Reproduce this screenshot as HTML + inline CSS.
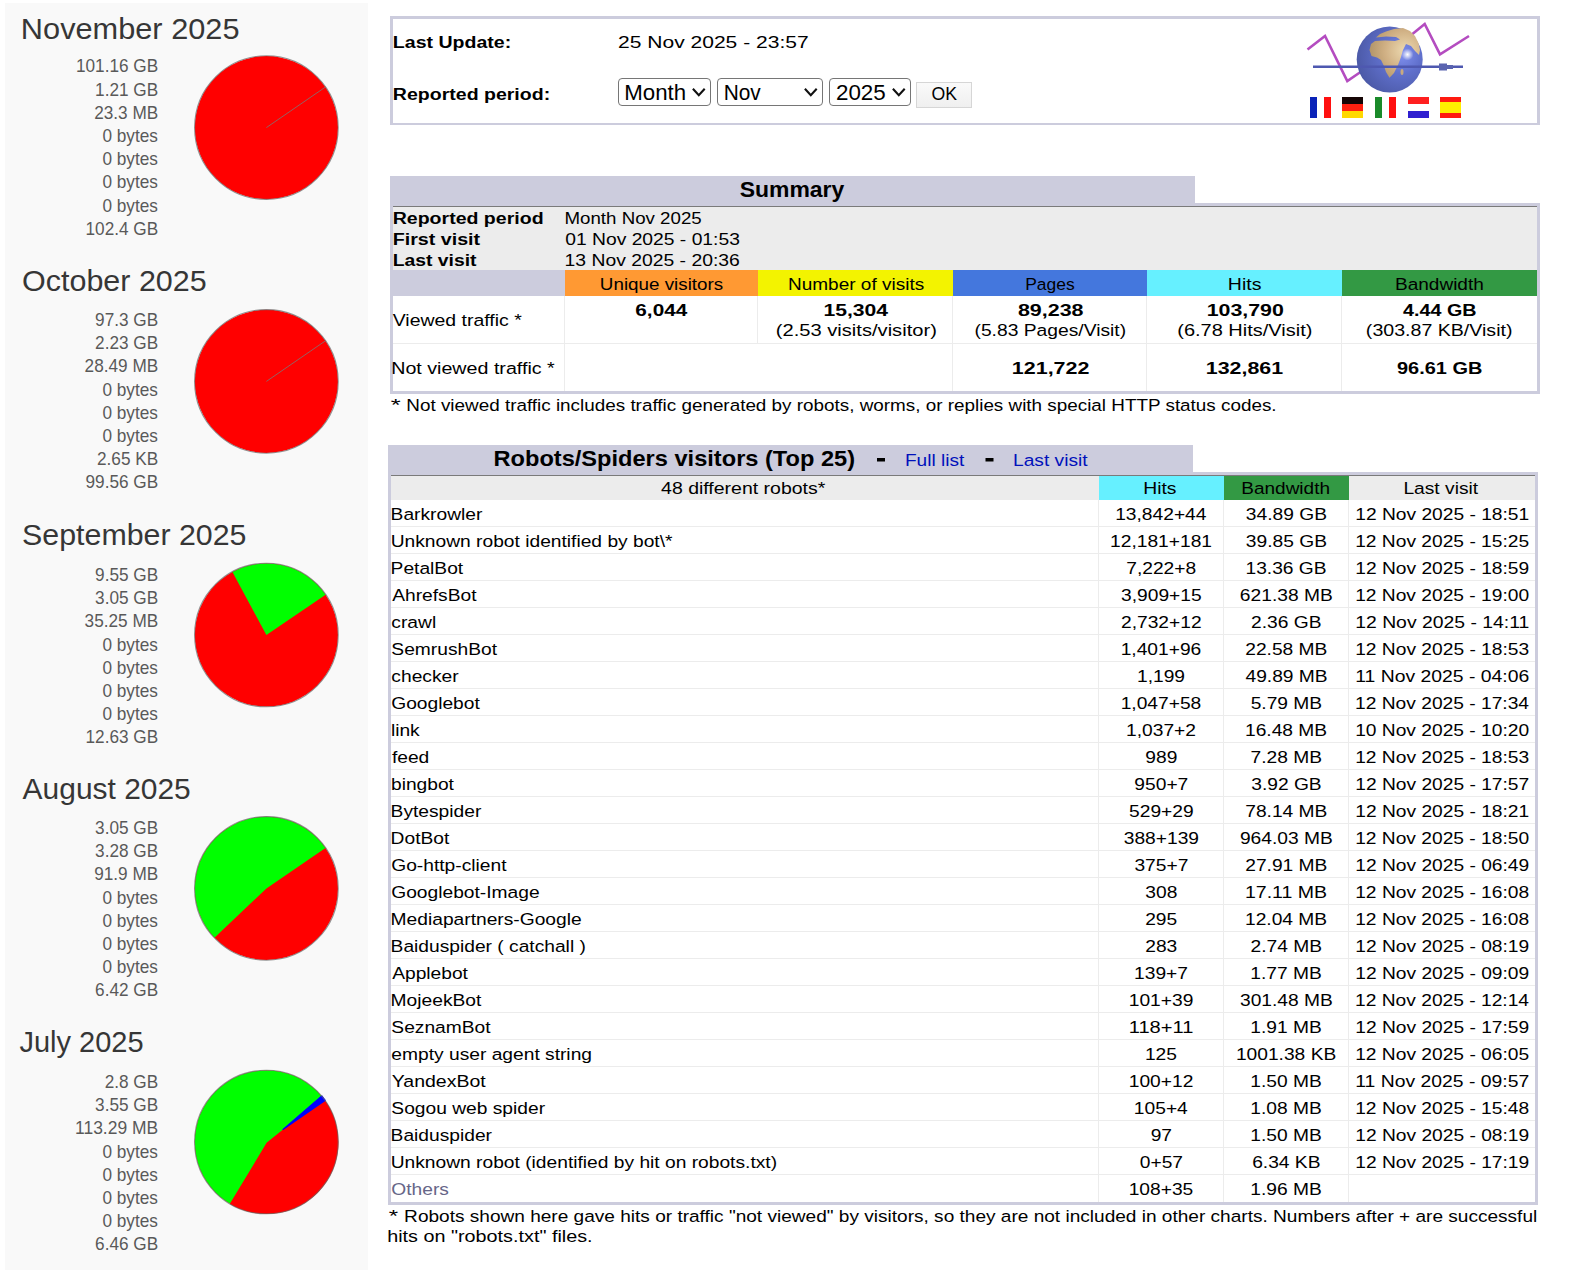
<!DOCTYPE html>
<html><head><meta charset="utf-8"><title>AWStats</title>
<style>html,body{margin:0;padding:0;background:#fff;width:1571px;height:1275px;overflow:hidden}svg{display:block}text{font-family:"Liberation Sans",sans-serif}</style>
</head><body>
<svg width="1571" height="1275" viewBox="0 0 1571 1275" font-family="Liberation Sans, sans-serif"><rect x="5" y="3" width="363" height="1267" fill="#f9f9f9" />
<text x="20.88" y="39.00" font-size="29.6" fill="#363636" textLength="218.61" lengthAdjust="spacingAndGlyphs" >November 2025</text>
<text x="75.97" y="72.30" font-size="18.5" fill="#595959" textLength="82.24" lengthAdjust="spacingAndGlyphs" >101.16 GB</text>
<text x="95.10" y="95.50" font-size="18.5" fill="#595959" textLength="63.11" lengthAdjust="spacingAndGlyphs" >1.21 GB</text>
<text x="94.15" y="118.70" font-size="18.5" fill="#595959" textLength="64.05" lengthAdjust="spacingAndGlyphs" >23.3 MB</text>
<text x="102.47" y="141.90" font-size="18.5" fill="#595959" textLength="55.45" lengthAdjust="spacingAndGlyphs" >0 bytes</text>
<text x="102.47" y="165.10" font-size="18.5" fill="#595959" textLength="55.45" lengthAdjust="spacingAndGlyphs" >0 bytes</text>
<text x="102.47" y="188.30" font-size="18.5" fill="#595959" textLength="55.45" lengthAdjust="spacingAndGlyphs" >0 bytes</text>
<text x="102.47" y="211.50" font-size="18.5" fill="#595959" textLength="55.45" lengthAdjust="spacingAndGlyphs" >0 bytes</text>
<text x="85.54" y="234.70" font-size="18.5" fill="#595959" textLength="72.67" lengthAdjust="spacingAndGlyphs" >102.4 GB</text>
<circle cx="266.4" cy="127.6" r="71.6" fill="#ff0000"/>
<line x1="266.4" y1="127.6" x2="325.41" y2="87.05" stroke="#7a7a7a" stroke-width="1" opacity="0.8"/>
<circle cx="266.4" cy="127.6" r="71.8" fill="none" stroke="#666" stroke-width="1.1" opacity="0.7"/>
<text x="22.06" y="291.00" font-size="29.6" fill="#363636" textLength="184.62" lengthAdjust="spacingAndGlyphs" >October 2025</text>
<text x="95.10" y="326.00" font-size="18.5" fill="#595959" textLength="63.11" lengthAdjust="spacingAndGlyphs" >97.3 GB</text>
<text x="95.10" y="349.20" font-size="18.5" fill="#595959" textLength="63.11" lengthAdjust="spacingAndGlyphs" >2.23 GB</text>
<text x="84.59" y="372.40" font-size="18.5" fill="#595959" textLength="73.62" lengthAdjust="spacingAndGlyphs" >28.49 MB</text>
<text x="102.47" y="395.60" font-size="18.5" fill="#595959" textLength="55.45" lengthAdjust="spacingAndGlyphs" >0 bytes</text>
<text x="102.47" y="418.80" font-size="18.5" fill="#595959" textLength="55.45" lengthAdjust="spacingAndGlyphs" >0 bytes</text>
<text x="102.47" y="442.00" font-size="18.5" fill="#595959" textLength="55.45" lengthAdjust="spacingAndGlyphs" >0 bytes</text>
<text x="97.01" y="465.20" font-size="18.5" fill="#595959" textLength="61.20" lengthAdjust="spacingAndGlyphs" >2.65 KB</text>
<text x="85.54" y="488.40" font-size="18.5" fill="#595959" textLength="72.67" lengthAdjust="spacingAndGlyphs" >99.56 GB</text>
<circle cx="266.4" cy="381.4" r="71.6" fill="#ff0000"/>
<line x1="266.4" y1="381.4" x2="325.41" y2="340.85" stroke="#7a7a7a" stroke-width="1" opacity="0.8"/>
<circle cx="266.4" cy="381.4" r="71.8" fill="none" stroke="#666" stroke-width="1.1" opacity="0.7"/>
<text x="22.12" y="545.20" font-size="29.6" fill="#363636" textLength="224.35" lengthAdjust="spacingAndGlyphs" >September 2025</text>
<text x="95.10" y="580.90" font-size="18.5" fill="#595959" textLength="63.11" lengthAdjust="spacingAndGlyphs" >9.55 GB</text>
<text x="95.10" y="604.10" font-size="18.5" fill="#595959" textLength="63.11" lengthAdjust="spacingAndGlyphs" >3.05 GB</text>
<text x="84.59" y="627.30" font-size="18.5" fill="#595959" textLength="73.62" lengthAdjust="spacingAndGlyphs" >35.25 MB</text>
<text x="102.47" y="650.50" font-size="18.5" fill="#595959" textLength="55.45" lengthAdjust="spacingAndGlyphs" >0 bytes</text>
<text x="102.47" y="673.70" font-size="18.5" fill="#595959" textLength="55.45" lengthAdjust="spacingAndGlyphs" >0 bytes</text>
<text x="102.47" y="696.90" font-size="18.5" fill="#595959" textLength="55.45" lengthAdjust="spacingAndGlyphs" >0 bytes</text>
<text x="102.47" y="720.10" font-size="18.5" fill="#595959" textLength="55.45" lengthAdjust="spacingAndGlyphs" >0 bytes</text>
<text x="85.54" y="743.30" font-size="18.5" fill="#595959" textLength="72.67" lengthAdjust="spacingAndGlyphs" >12.63 GB</text>
<circle cx="266.4" cy="635.0" r="71.6" fill="#ff0000"/>
<path d="M266.40,635.00 L325.62,594.75 A71.6,71.6 0 0 0 232.46,571.96 Z" fill="#00ff00"/>
<circle cx="266.4" cy="635.0" r="71.8" fill="none" stroke="#666" stroke-width="1.1" opacity="0.7"/>
<text x="22.64" y="799.00" font-size="29.6" fill="#363636" textLength="168.12" lengthAdjust="spacingAndGlyphs" >August 2025</text>
<text x="95.10" y="834.00" font-size="18.5" fill="#595959" textLength="63.11" lengthAdjust="spacingAndGlyphs" >3.05 GB</text>
<text x="95.10" y="857.20" font-size="18.5" fill="#595959" textLength="63.11" lengthAdjust="spacingAndGlyphs" >3.28 GB</text>
<text x="94.15" y="880.40" font-size="18.5" fill="#595959" textLength="64.05" lengthAdjust="spacingAndGlyphs" >91.9 MB</text>
<text x="102.47" y="903.60" font-size="18.5" fill="#595959" textLength="55.45" lengthAdjust="spacingAndGlyphs" >0 bytes</text>
<text x="102.47" y="926.80" font-size="18.5" fill="#595959" textLength="55.45" lengthAdjust="spacingAndGlyphs" >0 bytes</text>
<text x="102.47" y="950.00" font-size="18.5" fill="#595959" textLength="55.45" lengthAdjust="spacingAndGlyphs" >0 bytes</text>
<text x="102.47" y="973.20" font-size="18.5" fill="#595959" textLength="55.45" lengthAdjust="spacingAndGlyphs" >0 bytes</text>
<text x="95.10" y="996.40" font-size="18.5" fill="#595959" textLength="63.11" lengthAdjust="spacingAndGlyphs" >6.42 GB</text>
<circle cx="266.4" cy="888.4" r="71.6" fill="#ff0000"/>
<path d="M266.40,888.40 L325.48,847.95 A71.6,71.6 0 1 0 214.46,937.69 Z" fill="#00ff00"/>
<circle cx="266.4" cy="888.4" r="71.8" fill="none" stroke="#666" stroke-width="1.1" opacity="0.7"/>
<text x="19.45" y="1052.20" font-size="29.6" fill="#363636" textLength="124.17" lengthAdjust="spacingAndGlyphs" >July 2025</text>
<text x="104.67" y="1088.00" font-size="18.5" fill="#595959" textLength="53.54" lengthAdjust="spacingAndGlyphs" >2.8 GB</text>
<text x="95.10" y="1111.20" font-size="18.5" fill="#595959" textLength="63.11" lengthAdjust="spacingAndGlyphs" >3.55 GB</text>
<text x="75.02" y="1134.40" font-size="18.5" fill="#595959" textLength="83.19" lengthAdjust="spacingAndGlyphs" >113.29 MB</text>
<text x="102.47" y="1157.60" font-size="18.5" fill="#595959" textLength="55.45" lengthAdjust="spacingAndGlyphs" >0 bytes</text>
<text x="102.47" y="1180.80" font-size="18.5" fill="#595959" textLength="55.45" lengthAdjust="spacingAndGlyphs" >0 bytes</text>
<text x="102.47" y="1204.00" font-size="18.5" fill="#595959" textLength="55.45" lengthAdjust="spacingAndGlyphs" >0 bytes</text>
<text x="102.47" y="1227.20" font-size="18.5" fill="#595959" textLength="55.45" lengthAdjust="spacingAndGlyphs" >0 bytes</text>
<text x="95.10" y="1250.40" font-size="18.5" fill="#595959" textLength="63.11" lengthAdjust="spacingAndGlyphs" >6.46 GB</text>
<circle cx="266.4" cy="1142.0" r="71.6" fill="#ff0000"/>
<circle cx="266.4" cy="1142.0" r="71.6" fill="#00ff00"/>
<path d="M266.6,1142.8 L229.71,1204.07 A72.1,72.1 0 0 0 325.28,1100.38 L283,1129.4 Z" fill="#ff0000"/>
<path d="M283,1129.4 L321.81,1095.86 A72.1,72.1 0 0 0 325.28,1100.38 Z" fill="#0000ff" stroke="#0000ff" stroke-width="1.2" stroke-linejoin="round"/>
<circle cx="266.4" cy="1142.0" r="71.8" fill="none" stroke="#666" stroke-width="1.1" opacity="0.7"/>
<rect x="390" y="16" width="1150" height="109" fill="#ccccdd" />
<rect x="393" y="19" width="1144" height="104" fill="#ffffff" />
<text x="392.89" y="47.90" font-size="17.4" font-weight="bold" fill="#000" textLength="118.29" lengthAdjust="spacingAndGlyphs" >Last Update:</text>
<text x="618.04" y="47.50" font-size="17.4" fill="#000" textLength="190.62" lengthAdjust="spacingAndGlyphs" >25 Nov 2025 - 23:57</text>
<text x="392.89" y="99.50" font-size="17.4" font-weight="bold" fill="#000" textLength="157.28" lengthAdjust="spacingAndGlyphs" >Reported period:</text>
<rect x="618.5" y="78.5" width="92" height="27" rx="3.5" fill="#fff" stroke="#767676" stroke-width="1"/>
<text x="624.27" y="99.70" font-size="21.7" fill="#000" textLength="61.87" lengthAdjust="spacingAndGlyphs" >Month</text>
<path d="M692.9,88.8 L698.8,95.1 L704.6999999999999,88.8" fill="none" stroke="#111" stroke-width="2.1"/>
<rect x="717.5" y="78.5" width="105" height="27" rx="3.5" fill="#fff" stroke="#767676" stroke-width="1"/>
<text x="723.69" y="99.70" font-size="21.7" fill="#000" textLength="37.08" lengthAdjust="spacingAndGlyphs" >Nov</text>
<path d="M804.9,88.8 L810.8,95.1 L816.6999999999999,88.8" fill="none" stroke="#111" stroke-width="2.1"/>
<rect x="829.5" y="78.5" width="81" height="27" rx="3.5" fill="#fff" stroke="#767676" stroke-width="1"/>
<text x="835.97" y="99.70" font-size="21.7" fill="#000" textLength="49.76" lengthAdjust="spacingAndGlyphs" >2025</text>
<path d="M892.9,88.8 L898.8,95.1 L904.6999999999999,88.8" fill="none" stroke="#111" stroke-width="2.1"/>
<defs><linearGradient id="okg" x1="0" y1="0" x2="0" y2="1"><stop offset="0" stop-color="#fafafa"/><stop offset="1" stop-color="#efefef"/></linearGradient></defs>
<rect x="916.5" y="82.5" width="55" height="25" fill="url(#okg)" stroke="#d6d6d6" stroke-width="1"/>
<text x="931.46" y="99.70" font-size="17.9" fill="#000" textLength="25.54" lengthAdjust="spacingAndGlyphs" >OK</text>

<g>
 <defs>
  <radialGradient id="gl" cx="0.68" cy="0.42" r="0.85">
   <stop offset="0" stop-color="#8090ee"/>
   <stop offset="0.35" stop-color="#6070cc"/>
   <stop offset="0.8" stop-color="#4c5aa8"/>
   <stop offset="1" stop-color="#3e4a90"/>
  </radialGradient>
  <radialGradient id="gl2" cx="0.7" cy="0.45" r="0.8">
   <stop offset="0" stop-color="#ecd9b0"/>
   <stop offset="0.5" stop-color="#d0b084"/>
   <stop offset="1" stop-color="#a88c60"/>
  </radialGradient>
  <radialGradient id="hl" cx="0.5" cy="0.5" r="0.5">
   <stop offset="0" stop-color="#ffffff" stop-opacity="1"/>
   <stop offset="1" stop-color="#ffffff" stop-opacity="0"/>
  </radialGradient>
 </defs>
 <polyline points="1307.5,49.5 1325,36 1347.3,81 1362,71" fill="none" stroke="#b44cc0" stroke-width="2.6" stroke-linejoin="miter"/>
 <polyline points="1410,36 1424.7,24 1440,54.3 1469,36" fill="none" stroke="#b44cc0" stroke-width="2.6"/>
 <circle cx="1389.7" cy="59.5" r="33" fill="url(#gl)"/>
 <path d="M1376,37.5 L1380,34 L1386,31.5 L1394,29 L1403,28 L1410,31 L1415,36 L1418.5,43 L1420,50 L1419,55 L1415,51 L1411,46 L1406,44 L1403,50 L1401,57 L1398,65 L1394,73 L1389.5,77.7 L1386,72 L1384,66 L1381,60 L1377,57.5 L1371.5,56 L1369.5,50 L1371,44 L1375,41 L1385,40.5 L1395,41 L1400,39.5 L1396,37 L1386,36.5 Z" fill="url(#gl2)"/>
 <ellipse cx="1402" cy="72" rx="1.5" ry="3" fill="#c8aa80"/>
 <circle cx="1407.5" cy="54.5" r="6" fill="url(#hl)"/>
 <line x1="1313" y1="66.8" x2="1463" y2="66.8" stroke="#4e58b0" stroke-width="2.6"/>
 <rect x="1439" y="63.5" width="8" height="7" fill="#5a64b0"/>
 <rect x="1447" y="65" width="6" height="4" fill="#5a64b0"/>
</g>
<g>
 <rect x="1310" y="97" width="7" height="21" fill="#0a23b8"/><rect x="1324" y="97" width="7" height="21" fill="#ff1010"/>
 <rect x="1342" y="97" width="21" height="7" fill="#150505"/><rect x="1342" y="104" width="21" height="7" fill="#ff2010"/><rect x="1342" y="111" width="21" height="7" fill="#ffd800"/>
 <rect x="1375" y="97" width="7" height="21" fill="#1a8a2a"/><rect x="1389" y="97" width="7" height="21" fill="#ff1010"/>
 <rect x="1408" y="97" width="21" height="7" fill="#ff2020"/><rect x="1408" y="111" width="21" height="7" fill="#3020d0"/>
 <rect x="1440" y="97" width="21" height="5" fill="#ff1a10"/><rect x="1440" y="102" width="21" height="11" fill="#ffee00"/><rect x="1440" y="113" width="21" height="5" fill="#ff1a10"/>
</g>

<rect x="390" y="176" width="805" height="30" fill="#ccccdd" />
<rect x="390" y="203" width="1150" height="191" fill="#ccccdd" />
<rect x="393" y="206" width="1144" height="1" fill="#7a7a7a" />
<rect x="393" y="207" width="1144" height="63" fill="#ececec" />
<text x="739.74" y="197.00" font-size="21.8" font-weight="bold" fill="#000" textLength="104.58" lengthAdjust="spacingAndGlyphs" >Summary</text>
<text x="392.69" y="223.70" font-size="17.4" font-weight="bold" fill="#000" textLength="150.90" lengthAdjust="spacingAndGlyphs" >Reported period</text>
<text x="392.68" y="244.70" font-size="17.4" font-weight="bold" fill="#000" textLength="87.46" lengthAdjust="spacingAndGlyphs" >First visit</text>
<text x="392.71" y="265.70" font-size="17.4" font-weight="bold" fill="#000" textLength="83.83" lengthAdjust="spacingAndGlyphs" >Last visit</text>
<text x="564.47" y="223.70" font-size="17.0" fill="#000" textLength="137.22" lengthAdjust="spacingAndGlyphs" >Month Nov 2025</text>
<text x="565.25" y="244.70" font-size="17.0" fill="#000" textLength="174.60" lengthAdjust="spacingAndGlyphs" >01 Nov 2025 - 01:53</text>
<text x="564.53" y="265.70" font-size="17.0" fill="#000" textLength="175.32" lengthAdjust="spacingAndGlyphs" >13 Nov 2025 - 20:36</text>
<rect x="393" y="270" width="171" height="26" fill="#ccccdd" />
<rect x="565" y="270" width="193" height="26" fill="#ff9933" />
<text x="599.85" y="289.70" font-size="16.7" fill="#000" textLength="123.33" lengthAdjust="spacingAndGlyphs" >Unique visitors</text>
<rect x="758" y="270" width="195" height="26" fill="#f3f300" />
<text x="787.94" y="289.70" font-size="16.7" fill="#000" textLength="136.25" lengthAdjust="spacingAndGlyphs" >Number of visits</text>
<rect x="953" y="270" width="194" height="26" fill="#4477dd" />
<text x="1025.17" y="289.70" font-size="16.7" fill="#000" textLength="49.46" lengthAdjust="spacingAndGlyphs" >Pages</text>
<rect x="1147" y="270" width="195" height="26" fill="#66f0ff" />
<text x="1227.80" y="289.70" font-size="16.7" fill="#000" textLength="33.61" lengthAdjust="spacingAndGlyphs" >Hits</text>
<rect x="1342" y="270" width="195" height="26" fill="#339944" />
<text x="1394.94" y="289.70" font-size="16.7" fill="#000" textLength="88.90" lengthAdjust="spacingAndGlyphs" >Bandwidth</text>
<rect x="393" y="296" width="1144" height="95" fill="#ffffff" />
<rect x="393" y="343" width="1144" height="1" fill="#ececec" />
<rect x="564" y="296" width="1" height="95" fill="#ececec" />
<rect x="757" y="296" width="1" height="47" fill="#ececec" />
<rect x="952" y="296" width="1" height="95" fill="#ececec" />
<rect x="1146" y="296" width="1" height="95" fill="#ececec" />
<rect x="1341" y="296" width="1" height="95" fill="#ececec" />
<text x="392.72" y="326.40" font-size="16.7" fill="#000" textLength="128.99" lengthAdjust="spacingAndGlyphs" >Viewed traffic *</text>
<text x="391.19" y="374.00" font-size="16.7" fill="#000" textLength="163.52" lengthAdjust="spacingAndGlyphs" >Not viewed traffic *</text>
<text x="635.34" y="316.30" font-size="16.7" font-weight="bold" fill="#000" textLength="51.97" lengthAdjust="spacingAndGlyphs" >6,044</text>
<text x="823.47" y="316.30" font-size="16.7" font-weight="bold" fill="#000" textLength="64.64" lengthAdjust="spacingAndGlyphs" >15,304</text>
<text x="775.75" y="336.20" font-size="16.7" fill="#000" textLength="161.10" lengthAdjust="spacingAndGlyphs" >(2.53 visits/visitor)</text>
<text x="1017.92" y="316.30" font-size="16.7" font-weight="bold" fill="#000" textLength="65.64" lengthAdjust="spacingAndGlyphs" >89,238</text>
<text x="974.51" y="336.20" font-size="16.7" fill="#000" textLength="151.58" lengthAdjust="spacingAndGlyphs" >(5.83 Pages/Visit)</text>
<text x="1206.65" y="316.30" font-size="16.7" font-weight="bold" fill="#000" textLength="77.22" lengthAdjust="spacingAndGlyphs" >103,790</text>
<text x="1177.26" y="336.20" font-size="16.7" fill="#000" textLength="135.17" lengthAdjust="spacingAndGlyphs" >(6.78 Hits/Visit)</text>
<text x="1403.10" y="316.30" font-size="16.7" font-weight="bold" fill="#000" textLength="73.49" lengthAdjust="spacingAndGlyphs" >4.44 GB</text>
<text x="1365.89" y="336.20" font-size="16.7" fill="#000" textLength="146.62" lengthAdjust="spacingAndGlyphs" >(303.87 KB/Visit)</text>
<text x="1011.85" y="374.00" font-size="16.7" font-weight="bold" fill="#000" textLength="77.61" lengthAdjust="spacingAndGlyphs" >121,722</text>
<text x="1205.85" y="374.00" font-size="16.7" font-weight="bold" fill="#000" textLength="77.24" lengthAdjust="spacingAndGlyphs" >132,861</text>
<text x="1397.01" y="374.00" font-size="16.7" font-weight="bold" fill="#000" textLength="85.40" lengthAdjust="spacingAndGlyphs" >96.61 GB</text>
<text x="390.69" y="411.30" font-size="16.7" fill="#000" textLength="9.91" lengthAdjust="spacingAndGlyphs" >*</text>
<text x="406.35" y="411.30" font-size="16.7" fill="#000" textLength="870.27" lengthAdjust="spacingAndGlyphs" >Not viewed traffic includes traffic generated by robots, worms, or replies with special HTTP status codes.</text>
<rect x="388" y="445" width="805" height="30" fill="#ccccdd" />
<rect x="388" y="472" width="1150" height="733" fill="#ccccdd" />
<rect x="391" y="475" width="1144" height="1" fill="#7a7a7a" />
<text x="493.53" y="465.70" font-size="21.8" font-weight="bold" fill="#000" textLength="361.54" lengthAdjust="spacingAndGlyphs" >Robots/Spiders visitors (Top 25)</text>
<rect x="877" y="458" width="8" height="3.5" fill="#000" />
<text x="904.93" y="465.70" font-size="16.7" fill="#0011bb" textLength="59.41" lengthAdjust="spacingAndGlyphs" >Full list</text>
<rect x="985.5" y="458" width="8" height="3.5" fill="#000" />
<text x="1013.03" y="465.70" font-size="16.7" fill="#0011bb" textLength="74.61" lengthAdjust="spacingAndGlyphs" >Last visit</text>
<rect x="391" y="476" width="708" height="24" fill="#ececec" />
<rect x="1099" y="476" width="125" height="24" fill="#66f0ff" />
<rect x="1224" y="476" width="125" height="24" fill="#339944" />
<rect x="1349" y="476" width="186" height="24" fill="#ececec" />
<text x="661.05" y="494.20" font-size="16.7" fill="#000" textLength="164.25" lengthAdjust="spacingAndGlyphs" >48 different robots*</text>
<text x="1143.21" y="494.20" font-size="16.7" fill="#000" textLength="33.28" lengthAdjust="spacingAndGlyphs" >Hits</text>
<text x="1241.24" y="494.20" font-size="16.7" fill="#000" textLength="88.79" lengthAdjust="spacingAndGlyphs" >Bandwidth</text>
<text x="1403.42" y="494.20" font-size="16.7" fill="#000" textLength="74.72" lengthAdjust="spacingAndGlyphs" >Last visit</text>
<rect x="391" y="500" width="1144" height="702" fill="#ffffff" />
<rect x="391" y="526" width="1144" height="1" fill="#ececec" />
<text x="390.62" y="519.50" font-size="16.7" fill="#000" textLength="91.75" lengthAdjust="spacingAndGlyphs" >Barkrowler</text>
<text x="1115.20" y="519.50" font-size="16.7" fill="#000" textLength="91.29" lengthAdjust="spacingAndGlyphs" >13,842+44</text>
<text x="1245.88" y="519.50" font-size="16.7" fill="#000" textLength="81.12" lengthAdjust="spacingAndGlyphs" >34.89 GB</text>
<text x="1355.24" y="519.50" font-size="16.7" fill="#000" textLength="173.99" lengthAdjust="spacingAndGlyphs" >12 Nov 2025 - 18:51</text>
<rect x="391" y="553" width="1144" height="1" fill="#ececec" />
<text x="390.72" y="546.50" font-size="16.7" fill="#000" textLength="281.77" lengthAdjust="spacingAndGlyphs" >Unknown robot identified by bot\*</text>
<text x="1110.05" y="546.50" font-size="16.7" fill="#000" textLength="101.97" lengthAdjust="spacingAndGlyphs" >12,181+181</text>
<text x="1245.88" y="546.50" font-size="16.7" fill="#000" textLength="81.12" lengthAdjust="spacingAndGlyphs" >39.85 GB</text>
<text x="1355.18" y="546.50" font-size="16.7" fill="#000" textLength="173.99" lengthAdjust="spacingAndGlyphs" >12 Nov 2025 - 15:25</text>
<rect x="391" y="580" width="1144" height="1" fill="#ececec" />
<text x="390.62" y="573.50" font-size="16.7" fill="#000" textLength="72.58" lengthAdjust="spacingAndGlyphs" >PetalBot</text>
<text x="1126.26" y="573.50" font-size="16.7" fill="#000" textLength="69.94" lengthAdjust="spacingAndGlyphs" >7,222+8</text>
<text x="1245.51" y="573.50" font-size="16.7" fill="#000" textLength="81.12" lengthAdjust="spacingAndGlyphs" >13.36 GB</text>
<text x="1355.23" y="573.50" font-size="16.7" fill="#000" textLength="173.99" lengthAdjust="spacingAndGlyphs" >12 Nov 2025 - 18:59</text>
<rect x="391" y="607" width="1144" height="1" fill="#ececec" />
<text x="392.16" y="600.50" font-size="16.7" fill="#000" textLength="84.31" lengthAdjust="spacingAndGlyphs" >AhrefsBot</text>
<text x="1121.03" y="600.50" font-size="16.7" fill="#000" textLength="80.62" lengthAdjust="spacingAndGlyphs" >3,909+15</text>
<text x="1239.89" y="600.50" font-size="16.7" fill="#000" textLength="92.86" lengthAdjust="spacingAndGlyphs" >621.38 MB</text>
<text x="1355.15" y="600.50" font-size="16.7" fill="#000" textLength="173.99" lengthAdjust="spacingAndGlyphs" >12 Nov 2025 - 19:00</text>
<rect x="391" y="634" width="1144" height="1" fill="#ececec" />
<text x="391.38" y="627.50" font-size="16.7" fill="#000" textLength="44.80" lengthAdjust="spacingAndGlyphs" >crawl</text>
<text x="1120.99" y="627.50" font-size="16.7" fill="#000" textLength="80.62" lengthAdjust="spacingAndGlyphs" >2,732+12</text>
<text x="1251.10" y="627.50" font-size="16.7" fill="#000" textLength="70.44" lengthAdjust="spacingAndGlyphs" >2.36 GB</text>
<text x="1355.24" y="627.50" font-size="16.7" fill="#000" textLength="173.99" lengthAdjust="spacingAndGlyphs" >12 Nov 2025 - 14:11</text>
<rect x="391" y="661" width="1144" height="1" fill="#ececec" />
<text x="391.33" y="654.50" font-size="16.7" fill="#000" textLength="105.65" lengthAdjust="spacingAndGlyphs" >SemrushBot</text>
<text x="1120.68" y="654.50" font-size="16.7" fill="#000" textLength="80.62" lengthAdjust="spacingAndGlyphs" >1,401+96</text>
<text x="1245.23" y="654.50" font-size="16.7" fill="#000" textLength="82.18" lengthAdjust="spacingAndGlyphs" >22.58 MB</text>
<text x="1355.20" y="654.50" font-size="16.7" fill="#000" textLength="173.99" lengthAdjust="spacingAndGlyphs" >12 Nov 2025 - 18:53</text>
<rect x="391" y="688" width="1144" height="1" fill="#ececec" />
<text x="391.38" y="681.50" font-size="16.7" fill="#000" textLength="67.23" lengthAdjust="spacingAndGlyphs" >checker</text>
<text x="1137.00" y="681.50" font-size="16.7" fill="#000" textLength="48.05" lengthAdjust="spacingAndGlyphs" >1,199</text>
<text x="1245.50" y="681.50" font-size="16.7" fill="#000" textLength="82.18" lengthAdjust="spacingAndGlyphs" >49.89 MB</text>
<text x="1355.20" y="681.50" font-size="16.7" fill="#000" textLength="173.99" lengthAdjust="spacingAndGlyphs" >11 Nov 2025 - 04:06</text>
<rect x="391" y="715" width="1144" height="1" fill="#ececec" />
<text x="391.23" y="708.50" font-size="16.7" fill="#000" textLength="88.60" lengthAdjust="spacingAndGlyphs" >Googlebot</text>
<text x="1120.68" y="708.50" font-size="16.7" fill="#000" textLength="80.62" lengthAdjust="spacingAndGlyphs" >1,047+58</text>
<text x="1250.67" y="708.50" font-size="16.7" fill="#000" textLength="71.50" lengthAdjust="spacingAndGlyphs" >5.79 MB</text>
<text x="1355.05" y="708.50" font-size="16.7" fill="#000" textLength="173.99" lengthAdjust="spacingAndGlyphs" >12 Nov 2025 - 17:34</text>
<rect x="391" y="742" width="1144" height="1" fill="#ececec" />
<text x="390.91" y="735.50" font-size="16.7" fill="#000" textLength="28.81" lengthAdjust="spacingAndGlyphs" >link</text>
<text x="1126.08" y="735.50" font-size="16.7" fill="#000" textLength="69.94" lengthAdjust="spacingAndGlyphs" >1,037+2</text>
<text x="1244.98" y="735.50" font-size="16.7" fill="#000" textLength="82.18" lengthAdjust="spacingAndGlyphs" >16.48 MB</text>
<text x="1355.15" y="735.50" font-size="16.7" fill="#000" textLength="173.99" lengthAdjust="spacingAndGlyphs" >10 Nov 2025 - 10:20</text>
<rect x="391" y="769" width="1144" height="1" fill="#ececec" />
<text x="391.93" y="762.50" font-size="16.7" fill="#000" textLength="37.37" lengthAdjust="spacingAndGlyphs" >feed</text>
<text x="1145.29" y="762.50" font-size="16.7" fill="#000" textLength="32.03" lengthAdjust="spacingAndGlyphs" >989</text>
<text x="1250.56" y="762.50" font-size="16.7" fill="#000" textLength="71.50" lengthAdjust="spacingAndGlyphs" >7.28 MB</text>
<text x="1355.20" y="762.50" font-size="16.7" fill="#000" textLength="173.99" lengthAdjust="spacingAndGlyphs" >12 Nov 2025 - 18:53</text>
<rect x="391" y="796" width="1144" height="1" fill="#ececec" />
<text x="390.96" y="789.50" font-size="16.7" fill="#000" textLength="62.99" lengthAdjust="spacingAndGlyphs" >bingbot</text>
<text x="1134.37" y="789.50" font-size="16.7" fill="#000" textLength="53.92" lengthAdjust="spacingAndGlyphs" >950+7</text>
<text x="1251.22" y="789.50" font-size="16.7" fill="#000" textLength="70.44" lengthAdjust="spacingAndGlyphs" >3.92 GB</text>
<text x="1355.26" y="789.50" font-size="16.7" fill="#000" textLength="173.99" lengthAdjust="spacingAndGlyphs" >12 Nov 2025 - 17:57</text>
<rect x="391" y="823" width="1144" height="1" fill="#ececec" />
<text x="390.62" y="816.50" font-size="16.7" fill="#000" textLength="90.71" lengthAdjust="spacingAndGlyphs" >Bytespider</text>
<text x="1129.07" y="816.50" font-size="16.7" fill="#000" textLength="64.60" lengthAdjust="spacingAndGlyphs" >529+29</text>
<text x="1245.22" y="816.50" font-size="16.7" fill="#000" textLength="82.18" lengthAdjust="spacingAndGlyphs" >78.14 MB</text>
<text x="1355.24" y="816.50" font-size="16.7" fill="#000" textLength="173.99" lengthAdjust="spacingAndGlyphs" >12 Nov 2025 - 18:21</text>
<rect x="391" y="850" width="1144" height="1" fill="#ececec" />
<text x="390.62" y="843.50" font-size="16.7" fill="#000" textLength="58.70" lengthAdjust="spacingAndGlyphs" >DotBot</text>
<text x="1123.75" y="843.50" font-size="16.7" fill="#000" textLength="75.28" lengthAdjust="spacingAndGlyphs" >388+139</text>
<text x="1239.93" y="843.50" font-size="16.7" fill="#000" textLength="92.86" lengthAdjust="spacingAndGlyphs" >964.03 MB</text>
<text x="1355.15" y="843.50" font-size="16.7" fill="#000" textLength="173.99" lengthAdjust="spacingAndGlyphs" >12 Nov 2025 - 18:50</text>
<rect x="391" y="877" width="1144" height="1" fill="#ececec" />
<text x="391.23" y="870.50" font-size="16.7" fill="#000" textLength="115.25" lengthAdjust="spacingAndGlyphs" >Go-http-client</text>
<text x="1134.45" y="870.50" font-size="16.7" fill="#000" textLength="53.92" lengthAdjust="spacingAndGlyphs" >375+7</text>
<text x="1245.23" y="870.50" font-size="16.7" fill="#000" textLength="82.18" lengthAdjust="spacingAndGlyphs" >27.91 MB</text>
<text x="1355.23" y="870.50" font-size="16.7" fill="#000" textLength="173.99" lengthAdjust="spacingAndGlyphs" >12 Nov 2025 - 06:49</text>
<rect x="391" y="904" width="1144" height="1" fill="#ececec" />
<text x="391.23" y="897.50" font-size="16.7" fill="#000" textLength="148.36" lengthAdjust="spacingAndGlyphs" >Googlebot-Image</text>
<text x="1145.33" y="897.50" font-size="16.7" fill="#000" textLength="32.03" lengthAdjust="spacingAndGlyphs" >308</text>
<text x="1244.98" y="897.50" font-size="16.7" fill="#000" textLength="82.18" lengthAdjust="spacingAndGlyphs" >17.11 MB</text>
<text x="1355.19" y="897.50" font-size="16.7" fill="#000" textLength="173.99" lengthAdjust="spacingAndGlyphs" >12 Nov 2025 - 16:08</text>
<rect x="391" y="931" width="1144" height="1" fill="#ececec" />
<text x="390.62" y="924.50" font-size="16.7" fill="#000" textLength="191.03" lengthAdjust="spacingAndGlyphs" >Mediapartners-Google</text>
<text x="1145.20" y="924.50" font-size="16.7" fill="#000" textLength="32.03" lengthAdjust="spacingAndGlyphs" >295</text>
<text x="1244.98" y="924.50" font-size="16.7" fill="#000" textLength="82.18" lengthAdjust="spacingAndGlyphs" >12.04 MB</text>
<text x="1355.19" y="924.50" font-size="16.7" fill="#000" textLength="173.99" lengthAdjust="spacingAndGlyphs" >12 Nov 2025 - 16:08</text>
<rect x="391" y="958" width="1144" height="1" fill="#ececec" />
<text x="390.62" y="951.50" font-size="16.7" fill="#000" textLength="195.29" lengthAdjust="spacingAndGlyphs" >Baiduspider ( catchall )</text>
<text x="1145.22" y="951.50" font-size="16.7" fill="#000" textLength="32.03" lengthAdjust="spacingAndGlyphs" >283</text>
<text x="1250.57" y="951.50" font-size="16.7" fill="#000" textLength="71.50" lengthAdjust="spacingAndGlyphs" >2.74 MB</text>
<text x="1355.23" y="951.50" font-size="16.7" fill="#000" textLength="173.99" lengthAdjust="spacingAndGlyphs" >12 Nov 2025 - 08:19</text>
<rect x="391" y="985" width="1144" height="1" fill="#ececec" />
<text x="392.16" y="978.50" font-size="16.7" fill="#000" textLength="75.80" lengthAdjust="spacingAndGlyphs" >Applebot</text>
<text x="1134.09" y="978.50" font-size="16.7" fill="#000" textLength="53.92" lengthAdjust="spacingAndGlyphs" >139+7</text>
<text x="1250.32" y="978.50" font-size="16.7" fill="#000" textLength="71.50" lengthAdjust="spacingAndGlyphs" >1.77 MB</text>
<text x="1355.23" y="978.50" font-size="16.7" fill="#000" textLength="173.99" lengthAdjust="spacingAndGlyphs" >12 Nov 2025 - 09:09</text>
<rect x="391" y="1012" width="1144" height="1" fill="#ececec" />
<text x="390.62" y="1005.50" font-size="16.7" fill="#000" textLength="90.71" lengthAdjust="spacingAndGlyphs" >MojeekBot</text>
<text x="1128.72" y="1005.50" font-size="16.7" fill="#000" textLength="64.60" lengthAdjust="spacingAndGlyphs" >101+39</text>
<text x="1240.01" y="1005.50" font-size="16.7" fill="#000" textLength="92.86" lengthAdjust="spacingAndGlyphs" >301.48 MB</text>
<text x="1355.05" y="1005.50" font-size="16.7" fill="#000" textLength="173.99" lengthAdjust="spacingAndGlyphs" >12 Nov 2025 - 12:14</text>
<rect x="391" y="1039" width="1144" height="1" fill="#ececec" />
<text x="391.33" y="1032.50" font-size="16.7" fill="#000" textLength="99.25" lengthAdjust="spacingAndGlyphs" >SeznamBot</text>
<text x="1128.74" y="1032.50" font-size="16.7" fill="#000" textLength="64.60" lengthAdjust="spacingAndGlyphs" >118+11</text>
<text x="1250.32" y="1032.50" font-size="16.7" fill="#000" textLength="71.50" lengthAdjust="spacingAndGlyphs" >1.91 MB</text>
<text x="1355.23" y="1032.50" font-size="16.7" fill="#000" textLength="173.99" lengthAdjust="spacingAndGlyphs" >12 Nov 2025 - 17:59</text>
<rect x="391" y="1066" width="1144" height="1" fill="#ececec" />
<text x="391.38" y="1059.50" font-size="16.7" fill="#000" textLength="200.63" lengthAdjust="spacingAndGlyphs" >empty user agent string</text>
<text x="1144.95" y="1059.50" font-size="16.7" fill="#000" textLength="32.03" lengthAdjust="spacingAndGlyphs" >125</text>
<text x="1235.90" y="1059.50" font-size="16.7" fill="#000" textLength="100.35" lengthAdjust="spacingAndGlyphs" >1001.38 KB</text>
<text x="1355.18" y="1059.50" font-size="16.7" fill="#000" textLength="173.99" lengthAdjust="spacingAndGlyphs" >12 Nov 2025 - 06:05</text>
<rect x="391" y="1093" width="1144" height="1" fill="#ececec" />
<text x="391.78" y="1086.50" font-size="16.7" fill="#000" textLength="93.94" lengthAdjust="spacingAndGlyphs" >YandexBot</text>
<text x="1128.75" y="1086.50" font-size="16.7" fill="#000" textLength="64.60" lengthAdjust="spacingAndGlyphs" >100+12</text>
<text x="1250.32" y="1086.50" font-size="16.7" fill="#000" textLength="71.50" lengthAdjust="spacingAndGlyphs" >1.50 MB</text>
<text x="1355.26" y="1086.50" font-size="16.7" fill="#000" textLength="173.99" lengthAdjust="spacingAndGlyphs" >11 Nov 2025 - 09:57</text>
<rect x="391" y="1120" width="1144" height="1" fill="#ececec" />
<text x="391.33" y="1113.50" font-size="16.7" fill="#000" textLength="153.70" lengthAdjust="spacingAndGlyphs" >Sogou web spider</text>
<text x="1133.89" y="1113.50" font-size="16.7" fill="#000" textLength="53.92" lengthAdjust="spacingAndGlyphs" >105+4</text>
<text x="1250.32" y="1113.50" font-size="16.7" fill="#000" textLength="71.50" lengthAdjust="spacingAndGlyphs" >1.08 MB</text>
<text x="1355.19" y="1113.50" font-size="16.7" fill="#000" textLength="173.99" lengthAdjust="spacingAndGlyphs" >12 Nov 2025 - 15:48</text>
<rect x="391" y="1147" width="1144" height="1" fill="#ececec" />
<text x="390.62" y="1140.50" font-size="16.7" fill="#000" textLength="101.40" lengthAdjust="spacingAndGlyphs" >Baiduspider</text>
<text x="1150.65" y="1140.50" font-size="16.7" fill="#000" textLength="21.36" lengthAdjust="spacingAndGlyphs" >97</text>
<text x="1250.32" y="1140.50" font-size="16.7" fill="#000" textLength="71.50" lengthAdjust="spacingAndGlyphs" >1.50 MB</text>
<text x="1355.23" y="1140.50" font-size="16.7" fill="#000" textLength="173.99" lengthAdjust="spacingAndGlyphs" >12 Nov 2025 - 08:19</text>
<rect x="391" y="1174" width="1144" height="1" fill="#ececec" />
<text x="390.72" y="1167.50" font-size="16.7" fill="#000" textLength="386.33" lengthAdjust="spacingAndGlyphs" >Unknown robot (identified by hit on robots.txt)</text>
<text x="1139.78" y="1167.50" font-size="16.7" fill="#000" textLength="43.25" lengthAdjust="spacingAndGlyphs" >0+57</text>
<text x="1252.16" y="1167.50" font-size="16.7" fill="#000" textLength="68.32" lengthAdjust="spacingAndGlyphs" >6.34 KB</text>
<text x="1355.23" y="1167.50" font-size="16.7" fill="#000" textLength="173.99" lengthAdjust="spacingAndGlyphs" >12 Nov 2025 - 17:19</text>
<text x="391.29" y="1194.50" font-size="16.7" fill="#666688" textLength="57.62" lengthAdjust="spacingAndGlyphs" >Others</text>
<text x="1128.67" y="1194.50" font-size="16.7" fill="#000" textLength="64.60" lengthAdjust="spacingAndGlyphs" >108+35</text>
<text x="1250.32" y="1194.50" font-size="16.7" fill="#000" textLength="71.50" lengthAdjust="spacingAndGlyphs" >1.96 MB</text>
<rect x="1098" y="500" width="1" height="702" fill="#ececec" />
<rect x="1223" y="500" width="1" height="702" fill="#ececec" />
<rect x="1348" y="500" width="1" height="702" fill="#ececec" />
<text x="388.81" y="1222.00" font-size="16.7" fill="#000" textLength="9.36" lengthAdjust="spacingAndGlyphs" >*</text>
<text x="404.14" y="1222.00" font-size="16.7" fill="#000" textLength="1133.14" lengthAdjust="spacingAndGlyphs" >Robots shown here gave hits or traffic "not viewed" by visitors, so they are not included in other charts. Numbers after + are successful</text>
<text x="387.23" y="1242.00" font-size="16.7" fill="#000" textLength="205.38" lengthAdjust="spacingAndGlyphs" >hits on "robots.txt" files.</text></svg>
</body></html>
